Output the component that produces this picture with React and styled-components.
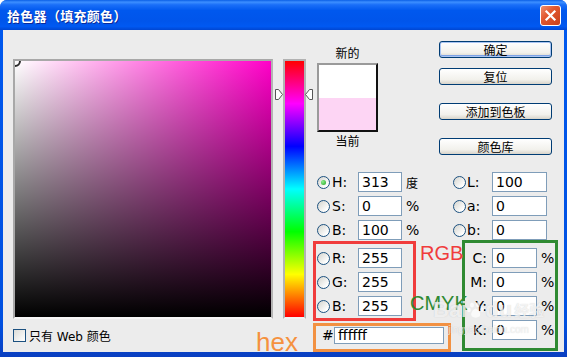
import React from "react"
import styled, { createGlobalStyle } from "styled-components"

const cjk = `"Noto Sans CJK SC", sans-serif`
const latin = `"DejaVu Sans", "Noto Sans CJK SC", sans-serif`
const arial = `"Liberation Sans", Arial, sans-serif`

const GlobalStyle = createGlobalStyle`
  html, body {
    margin: 0;
    padding: 0;
    background: #ffffff;
  }
`

const Window = styled.div`
  width: 567px;
  height: 357px;
  display: flex;
  flex-direction: column;
  border-radius: 7px 7px 0 0;
  overflow: hidden;
  background: #0054e3;
`

const TitleBar = styled.div`
  height: 30px;
  flex: none;
  display: flex;
  align-items: center;
  justify-content: space-between;
  padding: 0 6px 0 7px;
  box-sizing: border-box;
  background: linear-gradient(
    to bottom,
    #0a5fe6 0%,
    #3d8fff 7%,
    #1a6ff8 16%,
    #0058ee 35%,
    #0055eb 70%,
    #0059f2 88%,
    #0046d2 100%
  );
`

const Title = styled.span`
  font-family: ${cjk};
  font-size: 13px;
  font-weight: 700;
  color: #ffffff;
  text-shadow: 1px 1px 0 #0a2a9a;
  letter-spacing: 0.3px;
`

const CloseButton = styled.div`
  width: 21px;
  height: 21px;
  box-sizing: border-box;
  border: 1px solid #ffffff;
  border-radius: 3px;
  background: linear-gradient(135deg, #ee8f6f 0%, #e2582f 40%, #c8401a 100%);
  display: flex;
  align-items: center;
  justify-content: center;
`

const Frame = styled.div`
  flex: 1;
  display: flex;
  padding: 0 3px 5px 3px;
  background: linear-gradient(to bottom, #0058ee, #0050e0 90%, #0a3fc0);
`

const Client = styled.div`
  position: relative;
  flex: 1;
  display: flex;
  background: #ececec;
`

const LeftPane = styled.div`
  display: flex;
  flex-direction: column;
  padding: 29px 0 0 10px;
`

const PickerRow = styled.div`
  display: flex;
`

const ColorField = styled.div`
  position: relative;
  width: 256px;
  height: 256px;
  border: 2px solid;
  border-color: #a8a8a8 #b4b4b4 #f6f6f6 #a8a8a8;
  overflow: hidden;
  background: linear-gradient(to top, #000000, rgba(0, 0, 0, 0)),
    linear-gradient(to right, #ffffff, #ff00c8);
`

const FieldMarker = styled.div`
  position: absolute;
  left: -6px;
  top: -6px;
  width: 12px;
  height: 12px;
  box-sizing: border-box;
  border: 2px solid #2a2a2a;
  border-radius: 50%;
`

const HueSlider = styled.div`
  position: relative;
  width: 38px;
  height: 260px;
  margin-left: 2px;
`

const HueBar = styled.div`
  margin-left: 8px;
  width: 19px;
  height: 256px;
  border: 2px solid #b2b2b2;
  border-bottom-color: #f2f2f2;
  background: linear-gradient(
    to bottom,
    #ff0000 0%,
    #ff00ff 16.67%,
    #0000ff 33.33%,
    #00ffff 50%,
    #00ff00 66.67%,
    #ffff00 83.33%,
    #ff0000 100%
  );
`

const SliderArrow = styled.svg`
  position: absolute;
  top: 30px;
  ${(p) => (p.$side === "left" ? "left: 0;" : "right: 0;")}
`

const CheckRow = styled.label`
  display: flex;
  align-items: center;
  gap: 3px;
  margin-top: 8px;
  font-family: ${latin};
  font-size: 12px;
  color: #000000;
`

const Checkbox = styled.span`
  width: 13px;
  height: 13px;
  box-sizing: border-box;
  border: 1px solid #1c5180;
  background: linear-gradient(135deg, #dcdcd7, #ffffff);
`

const RightPane = styled.div`
  flex: 1;
  display: flex;
  flex-direction: column;
  padding-top: 11px;
`

const TopSection = styled.div`
  display: flex;
  align-items: flex-start;
`

const PreviewColumn = styled.div`
  width: 61px;
  margin: 5px 0 0 4px;
  display: flex;
  flex-direction: column;
  align-items: center;
  font-family: ${cjk};
  font-size: 12px;
  line-height: 14px;
  color: #000000;
`

const PreviewBox = styled.div`
  width: 61px;
  height: 69px;
  margin: 3px 0 2px;
  box-sizing: border-box;
  border: 2px solid;
  border-color: #9a9a9a #111111 #111111 #9a9a9a;
  display: flex;
  flex-direction: column;
`

const Swatch = styled.div`
  flex: 1;
  background: ${(p) => p.$color};
`

const ButtonColumn = styled.div`
  margin-left: 61px;
  display: flex;
  flex-direction: column;
`

const Button = styled.div`
  width: 113px;
  height: 17px;
  margin-top: ${(p) => p.$gap || 0}px;
  box-sizing: border-box;
  border: 1px solid #003c74;
  border-radius: 3px;
  background: linear-gradient(to bottom, #ffffff, #f2f1ec 70%, #d8d4ca);
  box-shadow: ${(p) =>
    p.$default ? "inset 0 0 0 1px #a9c4f2, inset 0 -1px 0 1px #7da2e6" : "none"};
  font-family: ${cjk};
  font-size: 12px;
  line-height: 15px;
  text-align: center;
  color: #000000;
`

const FieldsSection = styled.div`
  display: flex;
  margin-top: 17px;
`

const LeftFields = styled.div`
  width: 140px;
  display: flex;
  flex-direction: column;
`

const RightFields = styled.div`
  display: flex;
  flex-direction: column;
`

const Group = styled.div`
  display: flex;
  flex-direction: column;
  gap: 4px;
  padding-left: ${(p) => p.$indent || 0}px;
`

const MarkBox = styled.div`
  box-sizing: border-box;
  width: ${(p) => p.$w}px;
  height: ${(p) => p.$h}px;
  margin: ${(p) => p.$margin};
  padding: ${(p) => p.$pad};
  border: 3px solid ${(p) => p.$color};
  display: flex;
  flex-direction: ${(p) => (p.$row ? "row" : "column")};
  gap: 4px;
`

const Row = styled.div`
  display: flex;
  align-items: center;
  height: 20px;
`

const Radio = styled.span`
  position: relative;
  width: 13px;
  height: 13px;
  box-sizing: border-box;
  border: 1px solid #1c5180;
  border-radius: 50%;
  background: linear-gradient(135deg, #d4d4ce, #ffffff 80%);
  margin-right: ${(p) => p.$gap}px;

  &::after {
    content: "";
    display: ${(p) => (p.$checked ? "block" : "none")};
    position: absolute;
    left: 3px;
    top: 3px;
    width: 5px;
    height: 5px;
    border-radius: 50%;
    background: radial-gradient(circle at 35% 35%, #8df08d, #21a121);
  }
`

const Label = styled.span`
  width: ${(p) => p.$w}px;
  margin-right: ${(p) => p.$gap || 0}px;
  text-align: ${(p) => (p.$right ? "right" : "left")};
  font-family: ${latin};
  font-size: 14px;
  color: #000000;
`

const Input = styled.div`
  width: ${(p) => p.$w}px;
  height: ${(p) => p.$h || 20}px;
  box-sizing: border-box;
  border: 1px solid #7f9db9;
  background: #ffffff;
  padding-left: 3px;
  font-family: ${latin};
  font-size: 14px;
  line-height: ${(p) => (p.$h || 20) - 2}px;
  color: #000000;
`

const Unit = styled.span`
  margin-left: 4px;
  font-family: ${latin};
  font-size: ${(p) => (p.$cjk ? 12 : 14)}px;
  color: #000000;
`

const Annotation = styled.span`
  position: absolute;
  left: ${(p) => p.$x}px;
  top: ${(p) => p.$y}px;
  font-family: ${arial};
  font-size: ${(p) => p.$size}px;
  line-height: 1;
  color: ${(p) => p.$color};
`

const Watermark = styled.div`
  position: absolute;
  left: 430px;
  top: 268px;
  display: flex;
  flex-direction: column;
  align-items: center;
  color: rgba(255, 255, 255, 0.72);
  text-shadow: 0 0 1px rgba(120, 120, 120, 0.35);
  pointer-events: none;
`

const WatermarkTop = styled.div`
  display: flex;
  align-items: center;
  font-family: ${arial};
  font-size: 22px;
  font-weight: 700;
  line-height: 24px;
`

const WatermarkCjk = styled.span`
  font-family: ${cjk};
  font-size: 15px;
  margin-left: 2px;
`

const WatermarkUrl = styled.div`
  font-family: ${arial};
  font-size: 10px;
  line-height: 12px;
  margin-top: 2px;
`

const hsbRows = [
  { id: "H", value: "313", unit: "度", checked: true },
  { id: "S", value: "0", unit: "%" },
  { id: "B", value: "100", unit: "%" },
]
const rgbRows = [
  { id: "R", value: "255" },
  { id: "G", value: "255" },
  { id: "B", value: "255" },
]
const labRows = [
  { id: "L", value: "100" },
  { id: "a", value: "0" },
  { id: "b", value: "0" },
]
const cmykRows = ["C", "M", "Y", "K"]

const LeftRow = ({ id, value, unit, checked }) => (
  <Row>
    <Radio $gap={2} $checked={checked} />
    <Label $w={26}>{id}:</Label>
    <Input $w={44}>{value}</Input>
    {unit && <Unit $cjk={unit === "度"}>{unit}</Unit>}
  </Row>
)

const App = () => {
  return (
    <>
      <GlobalStyle />
      <Window>
        <TitleBar>
          <Title>拾色器（填充颜色）</Title>
          <CloseButton>
            <svg width="13" height="13" viewBox="0 0 13 13">
              <path
                d="M2.5 2.5 L10.5 10.5 M10.5 2.5 L2.5 10.5"
                stroke="#ffffff"
                strokeWidth="2.2"
                strokeLinecap="square"
              />
            </svg>
          </CloseButton>
        </TitleBar>
        <Frame>
          <Client>
            <LeftPane>
              <PickerRow>
                <ColorField>
                  <FieldMarker />
                </ColorField>
                <HueSlider>
                  <SliderArrow $side="left" width="8" height="11" viewBox="0 0 8 11">
                    <path d="M0.5 0.5 H3.5 L7.5 5.5 L3.5 10.5 H0.5 Z" fill="#ffffff" stroke="#555555" />
                  </SliderArrow>
                  <HueBar />
                  <SliderArrow $side="right" width="8" height="11" viewBox="0 0 8 11">
                    <path d="M7.5 0.5 H4.5 L0.5 5.5 L4.5 10.5 H7.5 Z" fill="#ffffff" stroke="#555555" />
                  </SliderArrow>
                </HueSlider>
              </PickerRow>
              <CheckRow>
                <Checkbox />
                只有 Web 颜色
              </CheckRow>
            </LeftPane>

            <RightPane>
              <TopSection>
                <PreviewColumn>
                  新的
                  <PreviewBox>
                    <Swatch $color="#ffffff" />
                    <Swatch $color="#fdd5f4" />
                  </PreviewBox>
                  当前
                </PreviewColumn>
                <ButtonColumn>
                  <Button $default>确定</Button>
                  <Button $gap={10}>复位</Button>
                  <Button $gap={18}>添加到色板</Button>
                  <Button $gap={18}>颜色库</Button>
                </ButtonColumn>
              </TopSection>

              <FieldsSection>
                <LeftFields>
                  <Group $indent={4}>
                    {hsbRows.map((r) => (
                      <LeftRow key={r.id} {...r} />
                    ))}
                  </Group>
                  <MarkBox $color="#f03c3c" $w={103} $h={80} $margin="1px 0 0 0" $pad="4px 0 0 1px">
                    {rgbRows.map((r) => (
                      <LeftRow key={r.id} {...r} />
                    ))}
                  </MarkBox>
                  <MarkBox $color="#f29142" $w={138} $h={29} $margin="2px 0 0 0" $pad="1px 0 0 6px" $row>
                    <Label $w={8}>#</Label>
                    <Input $w={110} $h={17}>ffffff</Input>
                  </MarkBox>
                </LeftFields>

                <RightFields>
                  <Group>
                    {labRows.map((r) => (
                      <Row key={r.id}>
                        <Radio $gap={1} />
                        <Label $w={25}>{r.id}:</Label>
                        <Input $w={55}>{r.value}</Input>
                      </Row>
                    ))}
                  </Group>
                  <MarkBox $color="#2f8a32" $w={96} $h={111} $margin="0 0 0 9px" $pad="5px 0 0 0">
                    {cmykRows.map((id) => (
                      <Row key={id}>
                        <Label $w={22} $gap={5} $right>
                          {id}:
                        </Label>
                        <Input $w={45}>0</Input>
                        <Unit>%</Unit>
                      </Row>
                    ))}
                  </MarkBox>
                </RightFields>
              </FieldsSection>
            </RightPane>

            <Annotation $x={417} $y={213} $size={20} $color="#f03c3c">
              RGB
            </Annotation>
            <Annotation $x={407} $y={263} $size={20} $color="#2f8a32">
              CMYK
            </Annotation>
            <Annotation $x={253} $y={299} $size={26} $color="#f5913e">
              hex
            </Annotation>

            <Watermark>
              <WatermarkTop>
                Bai
                <svg width="18" height="18" viewBox="0 0 18 18">
                  <ellipse cx="5" cy="4" rx="2" ry="2.6" fill="currentColor" />
                  <ellipse cx="11" cy="3.5" rx="2" ry="2.6" fill="currentColor" />
                  <ellipse cx="2" cy="9" rx="1.8" ry="2.3" fill="currentColor" />
                  <ellipse cx="15" cy="8.5" rx="1.8" ry="2.3" fill="currentColor" />
                  <path d="M8.5 7.5 C5 9 3 13 5 15.5 C7 17 10 17 12.5 15.5 C14.5 13 12 9 8.5 7.5 Z" fill="currentColor" />
                </svg>
                du
                <WatermarkCjk>经验</WatermarkCjk>
              </WatermarkTop>
              <WatermarkUrl>jingyan.baidu.com</WatermarkUrl>
            </Watermark>
          </Client>
        </Frame>
      </Window>
    </>
  )
}

export default App
